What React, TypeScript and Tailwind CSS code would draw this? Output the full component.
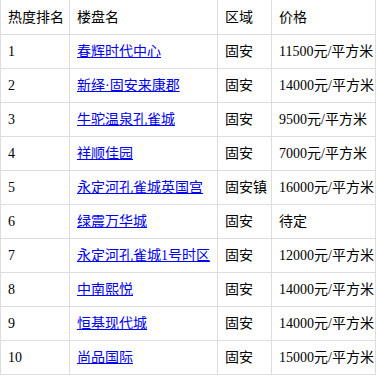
import React from 'react';

interface Row {
  rank: number;
  name: string;
  area: string;
  price: string;
}

const ROWS: Row[] = [
  { rank: 1, name: '春辉时代中心', area: '固安', price: '11500元/平方米' },
  { rank: 2, name: '新绎·固安来康郡', area: '固安', price: '14000元/平方米' },
  { rank: 3, name: '牛驼温泉孔雀城', area: '固安', price: '9500元/平方米' },
  { rank: 4, name: '祥顺佳园', area: '固安', price: '7000元/平方米' },
  { rank: 5, name: '永定河孔雀城英国宫', area: '固安镇', price: '16000元/平方米' },
  { rank: 6, name: '绿震万华城', area: '固安', price: '待定' },
  { rank: 7, name: '永定河孔雀城1号时区', area: '固安', price: '12000元/平方米' },
  { rank: 8, name: '中南熙悦', area: '固安', price: '14000元/平方米' },
  { rank: 9, name: '恒基现代城', area: '固安', price: '14000元/平方米' },
  { rank: 10, name: '尚品国际', area: '固安', price: '15000元/平方米' },
];

const base =
  'border border-[#dddddd] pl-[7px] pr-[4px] py-0 align-middle text-left font-normal whitespace-nowrap overflow-hidden';
const head = base + ' h-[35px] pt-px';
const cell = base + ' h-[34px]';

export default function App() {
  return (
    <div className="w-[376px] h-[375px] bg-white overflow-hidden font-['Liberation_Serif','Noto_Sans_CJK_SC',serif] text-[14px] leading-[20px] text-black">
      <table className="w-[375px] border-collapse table-fixed -mt-px">
        <colgroup>
          <col className="w-[69px]" />
          <col className="w-[148px]" />
          <col className="w-[54px]" />
          <col className="w-[104px]" />
        </colgroup>
        <thead>
          <tr>
            <th className={head}>热度排名</th>
            <th className={head}>楼盘名</th>
            <th className={head}>区域</th>
            <th className={head}>价格</th>
          </tr>
        </thead>
        <tbody>
          {ROWS.map((row) => (
            <tr key={row.rank}>
              <td className={cell}>{row.rank}</td>
              <td className={cell}>
                <a href="#" className="text-[#0000ee] underline">
                  {row.name}
                </a>
              </td>
              <td className={cell}>{row.area}</td>
              <td className={cell}>{row.price}</td>
            </tr>
          ))}
        </tbody>
      </table>
    </div>
  );
}
